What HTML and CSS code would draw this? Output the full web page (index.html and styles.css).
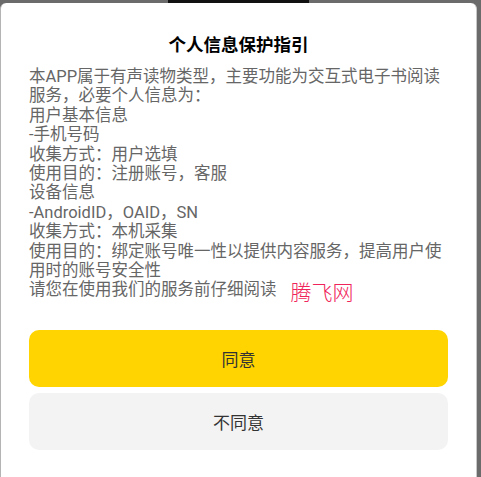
FILE: index.html
```html
<!DOCTYPE html>
<html lang="zh-CN">
<head>
  <meta charset="UTF-8">
  <meta name="viewport" content="width=device-width, initial-scale=1.0">
  <title>个人信息保护指引</title>
  <link rel="stylesheet" href="styles.css">
</head>
<body>
  <div class="topbar"><div class="notch"></div></div>
  <div class="dialog">
    <h1 class="title">个人信息保护指引</h1>
    <div class="content">
      本APP属于有声读物类型，主要功能为交互式电子书阅读服务，必要个人信息为：<br>
      用户基本信息<br>
      -手机号码<br>
      收集方式：用户选填<br>
      使用目的：注册账号，客服<br>
      设备信息<br>
      -AndroidID，OAID，SN<br>
      收集方式：本机采集<br>
      使用目的：绑定账号唯一性以提供内容服务，提高用户使用时的账号安全性<br>
      请您在使用我们的服务前仔细阅读<span class="mark">腾飞网</span>
    </div>
    <button class="btn btn-agree">同意</button>
    <button class="btn btn-refuse">不同意</button>
  </div>
</body>
</html>
```

FILE: styles.css
```css
html, body { margin: 0; padding: 0; }
body { background: #6b6b6b; width: 481px; height: 477px; overflow: hidden; font-family: Roboto, "Noto Sans CJK SC", sans-serif; }
.topbar { height: 3px; display: flex; justify-content: center; padding-right: 5px; }
.notch { width: 141px; height: 3px; background: #111; }
.dialog { width: 475px; height: 474px; background: #fff; border-radius: 6px 6px 0 0; border-left: 1px solid #b4b4b4; border-right: 1px solid #c8c8c8; box-sizing: border-box; width: 477px; padding: 30px 28px 0 28px; }
.title { margin: 0 0 10px; font-size: 17.5px; line-height: 24px; font-weight: bold; color: #000; text-align: center; }
.content { font-size: 16.5px; line-height: 19.4px; color: #666; }
.mark { display: inline-block; margin-left: 14px; font-size: 21px; line-height: 19px; vertical-align: top; color: #f0245a; font-weight: 300; position: relative; top: 4px; }
.btn { display: block; width: 100%; height: 57px; border: none; border-radius: 10px; font-family: Roboto, "Noto Sans CJK SC", sans-serif; font-size: 17px; color: #333; padding: 0; }
.btn-agree { margin-top: 30px; background: #ffd400; }
.btn-refuse { margin-top: 6px; background: #f3f3f3; }
```
